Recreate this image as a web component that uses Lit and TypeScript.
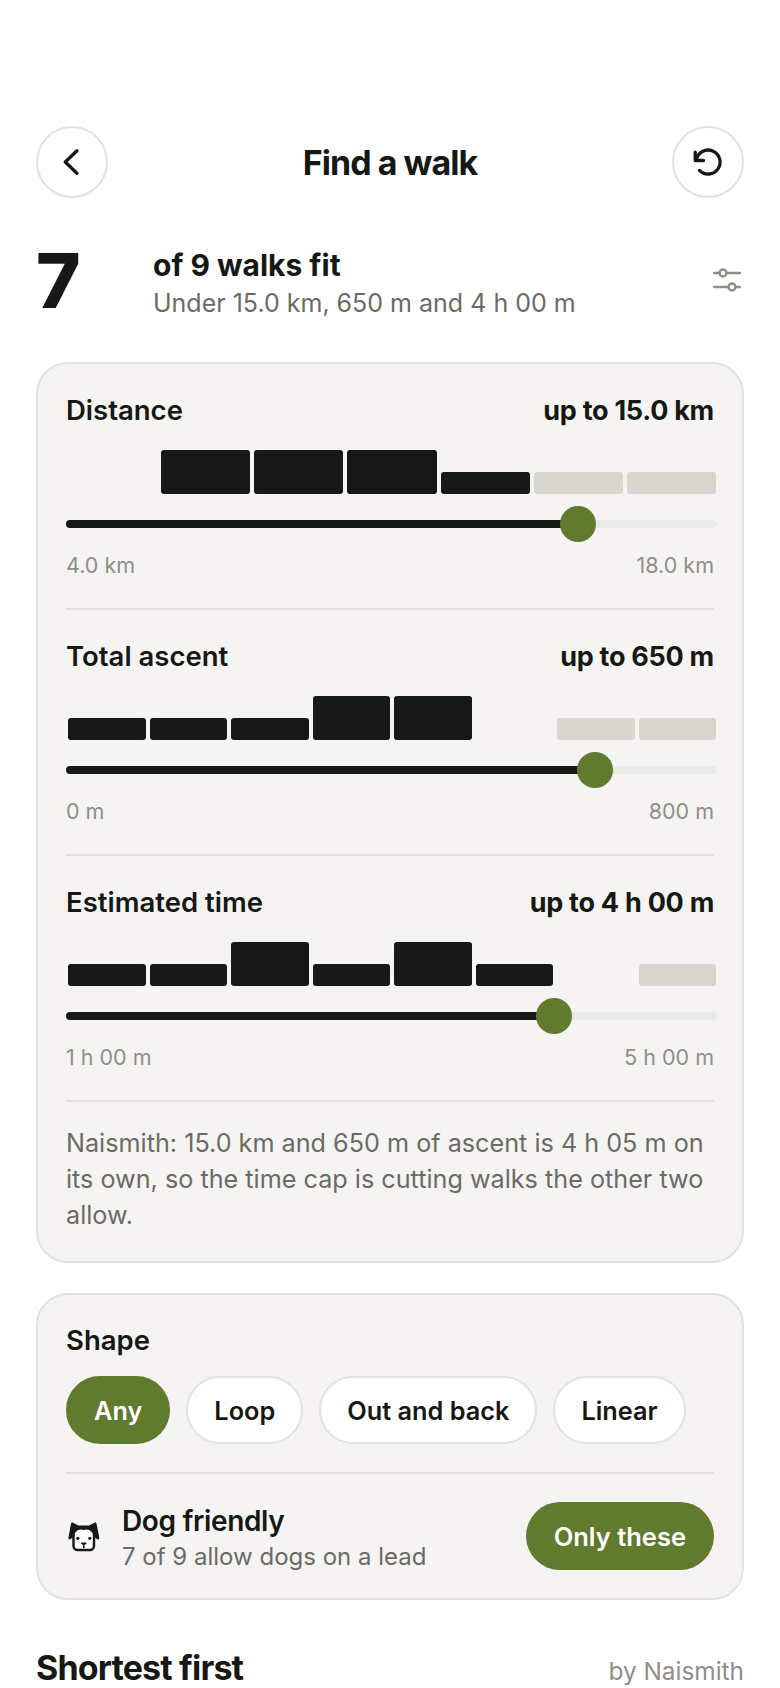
import { LitElement, html, css, svg } from "lit";
import { customElement } from "lit/decorators.js";

const FILTERS = [
  {
    label: "Distance",
    value: "up to 15.0 km",
    min: "4.0 km",
    max: "18.0 km",
    fraction: 11 / 14,
    bins: [[0, 0], [2, 1], [2, 1], [2, 1], [1, 1], [1, 0], [1, 0]],
  },
  {
    label: "Total ascent",
    value: "up to 650 m",
    min: "0 m",
    max: "800 m",
    fraction: 650 / 800,
    bins: [[1, 1], [1, 1], [1, 1], [2, 1], [2, 1], [0, 0], [1, 0], [1, 0]],
  },
  {
    label: "Estimated time",
    value: "up to 4 h 00 m",
    min: "1 h 00 m",
    max: "5 h 00 m",
    fraction: 3 / 4,
    bins: [[1, 1], [1, 1], [2, 1], [1, 1], [2, 1], [1, 1], [0, 0], [1, 0]],
  },
];

const SHAPES = ["Any", "Loop", "Out and back", "Linear"];

const dogIcon = svg`<svg class="dog" viewBox="0 0 32 32" width="32" height="32">
  <path d="M5.500 10v16a4 4 0 0 0 4 4h12.500a4 4 0 0 0 4-4V10" fill="#fff" stroke="#161813" stroke-width="2.400"/>
  <path d="M.4 17.800 3 3.500c.2-1 1-1.300 2-.8L10.500 5.500h10.500l5.500-2.800c1-.5 1.800-.2 2 .8L31.300 17.800c.2 1-.8 2-1.800 1.600L26 17C25 12 21 8 15.800 10 10.500 8 6.500 12 5.500 17L2 19.400c-1 .4-1.800-.6-1.600-1.600Z" fill="#161813"/>
  <circle cx="9.800" cy="18.300" r="1.600" fill="#161813"/>
  <circle cx="21.800" cy="18.300" r="1.600" fill="#161813"/>
  <path d="M13.300 23h5L15.800 25.500Z" fill="#161813" stroke="#161813" stroke-linejoin="round"/>
  <path d="M15.800 25.500v2.500" stroke="#161813" stroke-width="1.600"/>
</svg>`;

@customElement("app-root")
export class AppRoot extends LitElement {
  static styles = css`
    :host {
      display: block;
      height: 1688px;
      overflow: hidden;
      background: #fff;
      color: #161813;
      font-family: Inter, "Liberation Sans", sans-serif;
    }
    .page {
      padding: 126px 36px 0;
      display: flex;
      flex-direction: column;
    }
    .top {
      display: flex;
      align-items: center;
      justify-content: space-between;
    }
    .round {
      width: 72px;
      height: 72px;
      box-sizing: border-box;
      border-radius: 50%;
      border: 2px solid #e3e2dc;
      display: flex;
      align-items: center;
      justify-content: center;
    }
    .round svg {
      fill: none;
      stroke: #161813;
      stroke-width: 2.200;
      stroke-linecap: round;
      stroke-linejoin: round;
    }
    .title {
      font-size: 34px;
      font-weight: 700;
      letter-spacing: -0.97px;
    }
    .summary {
      display: flex;
      align-items: center;
      margin-top: 47px;
      height: 77px;
    }
    .count {
      width: 117px;
      margin-top: -7px;
      font-size: 76px;
      font-weight: 800;
      line-height: 72px;
      letter-spacing: -2px;
    }
    .summary-text {
      flex: 1;
    }
    .fit {
      font-size: 30px;
      line-height: 40px;
      font-weight: 700;
    }
    .under {
      font-size: 25px;
      line-height: 37px;
      color: #6b6b64;
    }
    .tune {
      fill: none;
      stroke: #8f8f87;
      stroke-width: 2.400;
      stroke-linecap: round;
      margin: -7px 3px 0 0;
    }
    .card {
      background: #f5f4f2;
      border: 2px solid #e3e2dc;
      border-radius: 32px;
      padding: 0 28px;
    }
    .filters {
      margin-top: 40px;
      padding-top: 24px;
      padding-bottom: 28px;
    }
    .filter {
      padding-bottom: 28px;
      margin-bottom: 24px;
      border-bottom: 2px solid #e3e2dc;
    }
    .row {
      display: flex;
      justify-content: space-between;
      align-items: center;
      height: 44px;
    }
    .label {
      font-size: 27.500px;
      font-weight: 600;
    }
    .value {
      font-size: 27px;
      font-weight: 700;
      letter-spacing: -0.27px;
    }
    .bars {
      display: flex;
      align-items: flex-end;
      gap: 4px;
      height: 44px;
      margin: 18px -2px 0 2px;
    }
    .bar {
      flex: 1;
      border-radius: 3px;
    }
    .bar.on {
      background: #161813;
    }
    .bar.off {
      background: #d8d7cf;
    }
    .track {
      position: relative;
      height: 8px;
      margin-top: 26px;
      margin-right: -3px;
      border-radius: 4px;
      background: #eaeae7;
    }
    .fill {
      height: 100%;
      border-radius: 4px;
      background: #161813;
    }
    .thumb {
      position: absolute;
      top: -14px;
      width: 36px;
      height: 36px;
      margin-left: -18px;
      border-radius: 50%;
      background: #607b2e;
    }
    .ends {
      display: flex;
      justify-content: space-between;
      margin-top: 22px;
      font-size: 21.500px;
      line-height: 30px;
      color: #8f8f87;
    }
    .note {
      margin-top: -1px;
      font-size: 25.200px;
      line-height: 36px;
      color: #6b6b64;
    }
    .options {
      margin-top: 30px;
      padding-top: 23px;
      padding-bottom: 28px;
    }
    .shape-label {
      height: 44px;
      display: flex;
      align-items: center;
      font-size: 27.500px;
      font-weight: 600;
    }
    .pills {
      display: flex;
      gap: 16px;
      margin-top: 14px;
      padding-bottom: 28px;
      border-bottom: 2px solid #e3e2dc;
    }
    .pill {
      box-sizing: border-box;
      height: 68px;
      padding: 0 26px;
      display: flex;
      align-items: center;
      border-radius: 34px;
      border: 2px solid #e3e2dc;
      background: #fff;
      font-size: 25.300px;
      font-weight: 600;
    }
    .pill.active {
      background: #607b2e;
      border-color: #607b2e;
      color: #fff;
    }
    .dog-row {
      display: flex;
      align-items: center;
      height: 68px;
      margin-top: 28px;
      gap: 22px;
    }
    .dog {
      flex: none;
      margin-left: 2px;
    }
    .dog-text {
      flex: 1;
      padding-top: 4px;
    }
    .dog-title {
      font-size: 28px;
      line-height: 36px;
      font-weight: 600;
      letter-spacing: -0.35px;
    }
    .dog-sub {
      font-size: 24px;
      line-height: 35px;
      color: #6b6b64;
    }
    .only {
      box-sizing: border-box;
      height: 68px;
      padding: 0 28px;
      display: flex;
      align-items: center;
      border-radius: 34px;
      background: #607b2e;
      color: #fff;
      font-size: 25.500px;
      font-weight: 600;
    }
    .results {
      display: flex;
      justify-content: space-between;
      align-items: baseline;
      margin-top: 47px;
    }
    .results-title {
      font-size: 34px;
      font-weight: 700;
      letter-spacing: -0.85px;
    }
    .results-note {
      font-size: 24.400px;
      color: #8f8f87;
    }
  `;

  renderFilter(f: (typeof FILTERS)[number]) {
    const pct = `${f.fraction * 100}%`;
    return html`
      <div class="filter">
        <div class="row">
          <span class="label">${f.label}</span>
          <span class="value">${f.value}</span>
        </div>
        <div class="bars">
          ${f.bins.map(
            ([level, on]) => html`<div
              class="bar ${on ? "on" : "off"}"
              style="height:${level * 22}px"
            ></div>`,
          )}
        </div>
        <div class="track">
          <div class="fill" style="width:${pct}"></div>
          <div class="thumb" style="left:${pct}"></div>
        </div>
        <div class="ends"><span>${f.min}</span><span>${f.max}</span></div>
      </div>
    `;
  }

  render() {
    return html`
      <div class="page">
        <div class="top">
          <div class="round">
            <svg viewBox="0 0 24 24" width="36" height="36"><path d="M15.300 4.500 7.500 12l7.800 7.500" /></svg>
          </div>
          <div class="title">Find a walk</div>
          <div class="round">
            <svg viewBox="0 0 24 24" width="36" height="36">
              <path d="M3.500 5.500V11H9" />
              <path d="M4.200 10.500A8 8 0 1 1 6.300 17.600" />
            </svg>
          </div>
        </div>

        <div class="summary">
          <div class="count">7</div>
          <div class="summary-text">
            <div class="fit">of 9 walks fit</div>
            <div class="under">Under 15.0 km, 650 m and 4 h 00 m</div>
          </div>
          <svg class="tune" viewBox="0 0 28 26" width="28" height="26">
            <path d="M1 6h5.500M13.500 6H27M1 20h14.500M22.500 20H27" />
            <circle cx="10" cy="6" r="3.500" />
            <circle cx="19" cy="20" r="3.500" />
          </svg>
        </div>

        <div class="card filters">
          ${FILTERS.map((f) => this.renderFilter(f))}
          <div class="note">
            Naismith: 15.0 km and 650 m of ascent is 4 h 05 m on its own, so the
            time cap is cutting walks the other two allow.
          </div>
        </div>

        <div class="card options">
          <div class="shape-label">Shape</div>
          <div class="pills">
            ${SHAPES.map(
              (s, i) => html`<div class="pill ${i === 0 ? "active" : ""}">${s}</div>`,
            )}
          </div>
          <div class="dog-row">
            ${dogIcon}
            <div class="dog-text">
              <div class="dog-title">Dog friendly</div>
              <div class="dog-sub">7 of 9 allow dogs on a lead</div>
            </div>
            <div class="only">Only these</div>
          </div>
        </div>

        <div class="results">
          <div class="results-title">Shortest first</div>
          <div class="results-note">by Naismith</div>
        </div>
      </div>
    `;
  }
}
